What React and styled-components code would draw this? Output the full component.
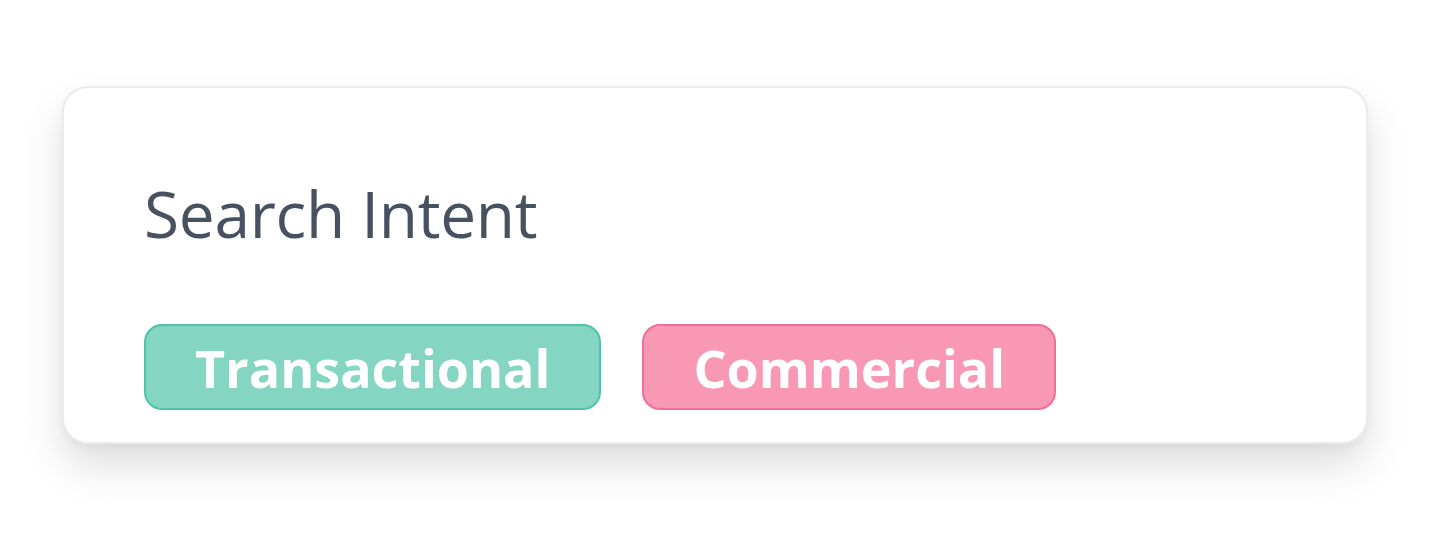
import React from 'react';
import styled, { createGlobalStyle } from 'styled-components';

const GlobalStyle = createGlobalStyle`
  html, body {
    margin: 0;
    padding: 0;
    background: #ffffff;
  }

  body {
    font-family: 'Open Sans', 'Noto Sans', sans-serif;
  }
`;

const Page = styled.div`
  padding: 86px 72px 0 62px;
  height: 548px;
  box-sizing: border-box;
`;

const Card = styled.section`
  box-sizing: border-box;
  width: 1306px;
  height: 358px;
  padding: 94px 80px 0;
  background: #fff;
  border: 2px solid #ebebeb;
  border-radius: 26px;
  box-shadow: 0 22px 40px rgba(0, 0, 0, 0.13), 0 4px 10px rgba(0, 0, 0, 0.04);
`;

const Title = styled.h2`
  margin: 0;
  font-size: 64px;
  font-weight: 400;
  line-height: 1;
  color: #475160;
  letter-spacing: -0.3px;
`;

const Tags = styled.div`
  display: flex;
  gap: 41px;
  margin-top: 78px;
`;

const palette = {
  green: { bg: '#84d6c2', border: '#4ec5a7' },
  pink: { bg: '#f898b5', border: '#f36d99' }
};

const Tag = styled.span`
  box-sizing: border-box;
  height: 86px;
  padding: 2px 49px 0;
  display: inline-flex;
  align-items: center;
  border-radius: 18px;
  border: 2px solid ${props => palette[props.tone].border};
  background: ${props => palette[props.tone].bg};
  color: #fff;
  font-size: 52px;
  font-weight: 700;
  line-height: 1;
`;

export default function App() {
  return (
    <Page>
      <GlobalStyle />
      <Card>
        <Title>Search Intent</Title>
        <Tags>
          <Tag tone="green">Transactional</Tag>
          <Tag tone="pink">Commercial</Tag>
        </Tags>
      </Card>
    </Page>
  );
}
